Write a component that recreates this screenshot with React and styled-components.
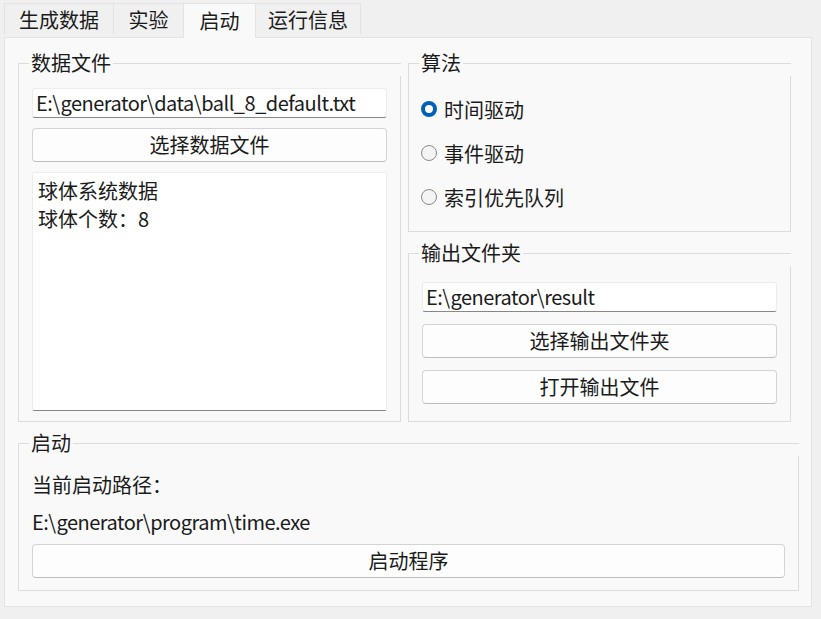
import React from "react";
import styled, { createGlobalStyle, css } from "styled-components";

const GlobalStyle = createGlobalStyle`
  body {
    margin: 0;
    background: #f0f0f0;
    font-family: "Noto Sans CJK SC", "Noto Sans", sans-serif;
    color: #1b1b1b;
  }
`;

const Window = styled.div`
  width: 821px;
  height: 619px;
  padding: 3px 0 0 4px;
  box-sizing: border-box;
  background: #f0f0f0;
  font-size: 20px;
`;

const TabBar = styled.div`
  display: flex;
  align-items: flex-end;
  height: 35px;
  margin-bottom: -1px;
  position: relative;
  z-index: 1;
`;

const Tab = styled.div`
  box-sizing: border-box;
  width: ${(p) => p.w}px;
  height: 31px;
  margin-bottom: 4px;
  padding-top: 2px;
  display: flex;
  align-items: center;
  justify-content: center;
  line-height: 26px;
  background: #f0f0f0;
  border: 1px solid #e3e3e3;
  border-bottom: none;
  border-right: none;
  &:last-child {
    border-right: 1px solid #e3e3e3;
  }
  ${(p) =>
    p.active &&
    css`
      height: 35px;
      margin-bottom: 0;
      padding-top: 0;
      background: #f9f9f9;
      border-right: 1px solid #e3e3e3;
      & + div {
        border-left: none;
      }
    `}
`;

const Pane = styled.div`
  box-sizing: border-box;
  width: 808px;
  height: 570px;
  background: #f9f9f9;
  border: 1px solid #e3e3e3;
  padding: 12px 0 15px 13px;
  display: flex;
  flex-direction: column;
  gap: 8px;
`;

const TopRow = styled.div`
  display: flex;
  gap: 7px;
  height: 372px;
`;

const Column = styled.div`
  width: 383px;
  display: flex;
  flex-direction: column;
  gap: 8px;
`;

const Group = styled.fieldset`
  position: relative;
  box-sizing: border-box;
  margin: 0;
  min-width: 0;
  width: ${(p) => p.w || 383}px;
  height: ${(p) => (p.h ? p.h + "px" : "auto")};
  flex: ${(p) => (p.grow ? "1 1 auto" : "none")};
  padding: 0 13px ${(p) => p.pb || 10}px;
  border: 1px solid #dcdcdc;
  display: flex;
  flex-direction: column;

  &::after {
    content: "";
    position: absolute;
    top: -12px;
    right: -1px;
    width: 1px;
    height: 12px;
    background: #f9f9f9;
  }
`;

const Title = styled.legend`
  padding: 0 2px;
  margin-left: -3px;
  line-height: 26px;
  font-size: 20px;
`;

const Body = styled.div`
  flex: 1;
  display: flex;
  flex-direction: column;
  gap: ${(p) => p.gap || 0}px;
  padding-top: ${(p) => p.pt || 0}px;
`;

const LineEdit = styled.div`
  box-sizing: border-box;
  height: 30px;
  background: #fff;
  border: 1px solid #ececec;
  border-bottom: 1px solid #878787;
  border-radius: 3px;
  padding: 0 3px;
  line-height: 28px;
  letter-spacing: -0.5px;
  white-space: nowrap;
  overflow: hidden;
`;

const Button = styled.div`
  box-sizing: border-box;
  height: 34px;
  flex: none;
  margin-top: ${(p) => p.mt || 0}px;
  background: #fdfdfd;
  border: 1px solid #d4d4d4;
  border-bottom-color: #bdbdbd;
  border-radius: 4px;
  display: flex;
  align-items: center;
  justify-content: center;
  line-height: 26px;
`;

const TextEdit = styled.div`
  flex: 1;
  background: #fff;
  border: 1px solid #ececec;
  border-bottom: 1px solid #878787;
  border-radius: 2px;
  padding: 4px 5px;
  line-height: 28px;
`;

const RadioRow = styled.div`
  height: 44px;
  display: flex;
  align-items: center;
  gap: 7px;
  margin-left: -1px;
`;

const RadioDot = styled.span`
  box-sizing: border-box;
  width: 16px;
  height: 16px;
  border-radius: 50%;
  flex: none;
  ${(p) =>
    p.checked
      ? css`
          background: #fff;
          border: 4.5px solid #005fb8;
        `
      : css`
          background: #f4f4f4;
          border: 1px solid #8a8a8a;
        `}
`;

const Label = styled.div`
  height: 26px;
  line-height: 26px;
  white-space: nowrap;
  margin-top: ${(p) => p.mt || 0}px;
  letter-spacing: ${(p) => (p.path ? "-0.5px" : "normal")};
`;

const tabs = [
  { name: "生成数据", w: 109 },
  { name: "实验", w: 70 },
  { name: "启动", w: 73, active: true },
  { name: "运行信息", w: 105 },
];

const algos = [
  { name: "时间驱动", checked: true },
  { name: "事件驱动" },
  { name: "索引优先队列" },
];

export default function App() {
  return (
    <Window>
      <GlobalStyle />
      <TabBar>
        {tabs.map((t) => (
          <Tab key={t.name} w={t.w} active={t.active}>
            {t.name}
          </Tab>
        ))}
      </TabBar>
      <Pane>
        <TopRow>
          <Group>
            <Title>数据文件</Title>
            <Body pt={12} gap={10}>
              <LineEdit>E:\generator\data\ball_8_default.txt</LineEdit>
              <Button>选择数据文件</Button>
              <TextEdit>
                球体系统数据
                <br />
                球体个数：8
              </TextEdit>
            </Body>
          </Group>
          <Column>
            <Group h={182} pb={12}>
              <Title>算法</Title>
              <Body pt={11}>
                {algos.map((a) => (
                  <RadioRow key={a.name}>
                    <RadioDot checked={a.checked} />
                    {a.name}
                  </RadioRow>
                ))}
              </Body>
            </Group>
            <Group grow>
              <Title>输出文件夹</Title>
              <Body pt={16} gap={12}>
                <LineEdit>E:\generator\result</LineEdit>
                <Button>选择输出文件夹</Button>
                <Button>打开输出文件</Button>
              </Body>
            </Group>
          </Column>
        </TopRow>
        <Group w={781} h={161} pb={12}>
          <Title>启动</Title>
          <Body pt={16}>
            <Label>当前启动路径：</Label>
            <Label mt={11} path>
              E:\generator\program\time.exe
            </Label>
            <Button mt={9}>启动程序</Button>
          </Body>
        </Group>
      </Pane>
    </Window>
  );
}
